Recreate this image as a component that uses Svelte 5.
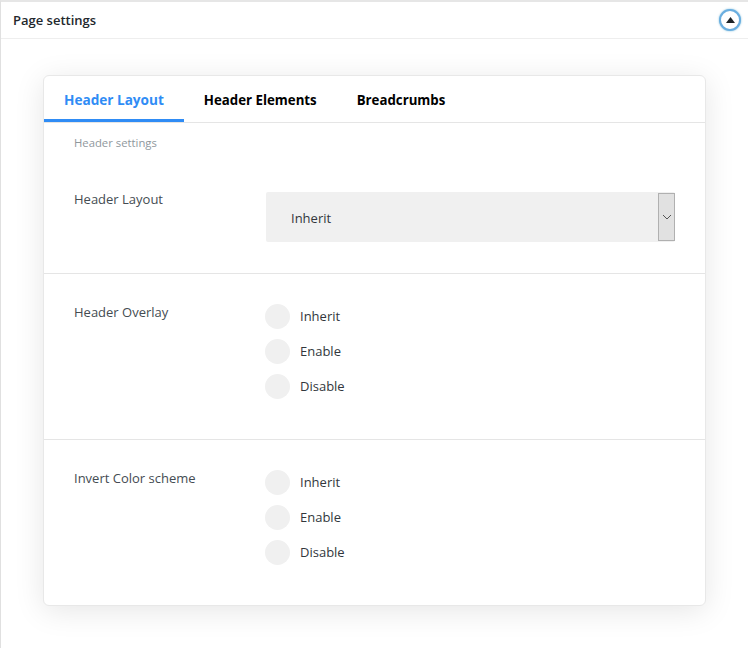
<script>
	const tabs = ['Header Layout', 'Header Elements', 'Breadcrumbs'];
	const choices = ['Inherit', 'Enable', 'Disable'];
	const radioRows = [
		{ label: 'Header Overlay', name: 'overlay' },
		{ label: 'Invert Color scheme', name: 'invert' }
	];
</script>

<section class="panel">
	<header class="panel-head">
		<h2>Page settings</h2>
		<button class="toggle" aria-label="Collapse">
			<svg width="9" height="6" viewBox="0 0 9 6"><path d="M4.5 0 9 6H0z" fill="#1d2327" /></svg>
		</button>
	</header>

	<div class="panel-body">
		<div class="card">
			<nav class="tabs">
				{#each tabs as tab, i}
					<span class="tab" class:active={i === 0}>{tab}</span>
				{/each}
			</nav>

			<p class="section-title">Header settings</p>

			<div class="row first">
				<span class="label">Header Layout</span>
				<div class="select">
					<span class="value">Inherit</span>
					<span class="arrow">
						<svg width="10" height="6" viewBox="0 0 10 6"><path d="M1 1l4 4 4-4" fill="none" stroke="#555" stroke-width="1" /></svg>
					</span>
				</div>
			</div>

			{#each radioRows as row}
				<div class="row radios">
					<span class="label">{row.label}</span>
					<div class="choices">
						{#each choices as choice}
							<div class="choice">
								<span class="dot"></span>
								<span class="text">{choice}</span>
							</div>
						{/each}
					</div>
				</div>
			{/each}
		</div>
	</div>
</section>

<style>
	:global(body) {
		background: #fff;
		font-family: 'Open Sans', 'Noto Sans', sans-serif;
		color: #32373c;
	}

	.panel {
		height: 648px;
		box-sizing: border-box;
		border-top: 2px solid #e6e6e6;
		border-left: 1px solid #e0e0e0;
		overflow: hidden;
	}

	.panel-head {
		height: 36px;
		display: flex;
		align-items: center;
		justify-content: space-between;
		padding: 0 7px 0 12px;
		border-bottom: 1px solid #eee;
	}

	h2 {
		margin: 0;
		font-size: 13px;
		font-weight: 600;
		color: #23282d;
	}

	.toggle {
		width: 22px;
		height: 22px;
		padding: 0;
		display: flex;
		align-items: center;
		justify-content: center;
		background: #fff;
		border: 2px solid #6aaee0;
		border-radius: 50%;
		box-shadow: 0 0 2px rgba(30, 140, 190, 0.6);
	}

	.panel-body {
		padding: 36px 42px 0;
	}

	.card {
		height: 531px;
		box-sizing: border-box;
		background: #fff;
		border: 1px solid #e8e8e8;
		border-radius: 6px;
		box-shadow: 0 5px 30px rgba(0, 0, 0, 0.1);
	}

	.tabs {
		display: flex;
		height: 46px;
		border-bottom: 1px solid #e5e5e5;
	}

	.tab {
		padding: 0 20px;
		line-height: 48px;
		height: 43px;
		font-size: 13.25px;
		font-weight: 700;
		color: #000;
	}

	.tab.active {
		font-size: 13.6px;
		color: #2f8cf5;
		border-bottom: 3px solid #2f8cf5;
	}

	.section-title {
		margin: 0;
		padding: 12px 30px 0;
		font-size: 11.3px;
		line-height: 16px;
		color: #8f979d;
	}

	.row {
		display: grid;
		grid-template-columns: 192px 1fr;
		padding: 0 30px;
		font-size: 13px;
	}

	.row.first {
		height: 123px;
		padding-top: 41px;
		box-sizing: border-box;
		border-bottom: 1px solid #e5e5e5;
	}

	.row.first .label {
		margin-top: -2px;
	}

	.radios {
		height: 166px;
		box-sizing: border-box;
		padding-top: 30px;
		border-bottom: 1px solid #e5e5e5;
	}

	.radios .label {
		margin-top: -1px;
	}

	.radios:last-child {
		border-bottom: 0;
	}

	.label {
		line-height: 18px;
		color: #444c52;
	}

	.select {
		height: 50px;
		display: flex;
		align-items: center;
		justify-content: space-between;
		background: #f0f0f0;
		border-radius: 2px;
	}

	.value {
		padding: 2px 0 0 25px;
	}

	.arrow {
		width: 15px;
		height: 46px;
		display: flex;
		align-items: center;
		justify-content: center;
		background: #e1e1e1;
		border: 1px solid #b0b0b0;
	}

	.choices {
		display: grid;
		gap: 10px;
		align-content: start;
		margin-left: -1px;
	}

	.choice {
		display: flex;
		align-items: center;
		gap: 10px;
		height: 25px;
	}

	.text {
		margin-top: -2px;
	}

	.dot {
		width: 25px;
		height: 25px;
		border-radius: 50%;
		background: #f0f0f0;
	}
</style>
